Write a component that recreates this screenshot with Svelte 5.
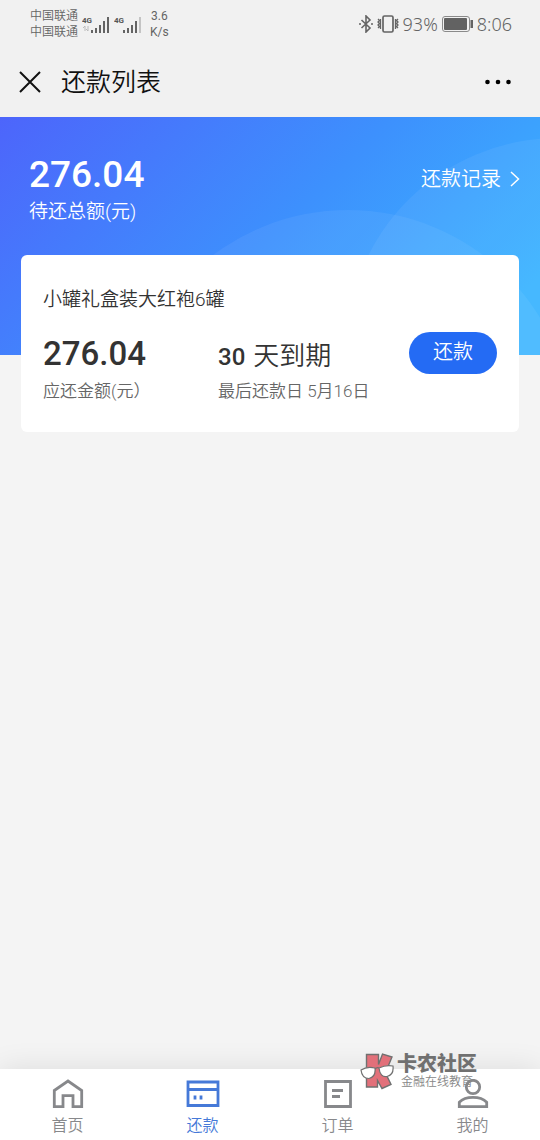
<script>
	let active = $state('repay');

	const total = '276.04';

	const bills = [{ name: '小罐礼盒装大红袍6罐', amount: '276.04', days: 30, due: '5月16日' }];

	const tabs = [
		{ id: 'home', label: '首页' },
		{ id: 'repay', label: '还款' },
		{ id: 'order', label: '订单' },
		{ id: 'mine', label: '我的' }
	];
</script>

{#snippet signal(weak)}
	<svg class="signal" width="28" height="20" viewBox="0 0 28 20" aria-hidden="true">
		<text x="0" y="9" class="network">4G</text>
		{#if !weak}
			<path d="M3 17v-5l-2 2M6 12v5l-2-2" fill="none" stroke="#bbb" />
		{/if}
		<path d="M9 16h2v3H9zM13 14h2v5h-2zM17 11h2v8h-2zM21 7h2v12h-2z" fill="#646464" />
		<path d="M25 3h2v16h-2z" fill={weak ? '#c4c4c4' : '#646464'} />
	</svg>
{/snippet}

<div class="page">
	<div class="status">
		<div class="carriers">
			<span>中国联通</span>
			<span>中国联通</span>
		</div>
		{@render signal(false)}
		{@render signal(true)}
		<div class="speed">
			<span>3.6</span>
			<span>K/s</span>
		</div>
		<div class="system">
			<svg width="14" height="18" viewBox="0 0 14 18" fill="none" stroke="#646464" stroke-width="1.6" aria-hidden="true">
				<path d="M2.500 5l8.500 8-4 4V1l4 4-8.500 8M0 9h2M12 9h2" />
			</svg>
			<svg width="22" height="18" viewBox="0 0 22 18" fill="none" stroke="#646464" aria-hidden="true">
				<rect x="6" y="1" width="10" height="16" rx="1.500" stroke-width="1.700" />
				<path d="M1 4l1.500 1.500L1 7l1.500 1.500L1 10l1.500 1.500L1 13M3.500 4v10M21 4l-1.500 1.500L21 7l-1.500 1.500L21 10l-1.500 1.500L21 13M18.500 4v10" stroke-width="1.300" />
			</svg>
			<span>93%</span>
			<svg class="battery" width="31" height="16" viewBox="0 0 31 16" aria-hidden="true">
				<rect x=".5" y=".5" width="27" height="15" rx="2.500" fill="#f1f1f1" stroke="#8a8a8a" />
				<rect x="2" y="2" width="23" height="12" rx="1" fill="#626262" />
				<path d="M28.500 4H31v8h-2.500z" fill="#646464" />
			</svg>
			<span>8:06</span>
		</div>
	</div>

	<header class="nav">
		<button class="plain" aria-label="关闭">
			<svg width="22" height="22" viewBox="0 0 22 22" fill="none" stroke="#111" stroke-width="2">
				<path d="M1 1l20 20M21 1L1 21" />
			</svg>
		</button>
		<h1>还款列表</h1>
		<button class="plain more" aria-label="更多">
			<svg width="28" height="6" viewBox="0 0 28 6" fill="#000">
				<circle cx="3.500" cy="3" r="2.300" />
				<circle cx="14" cy="3" r="2.300" />
				<circle cx="24.500" cy="3" r="2.300" />
			</svg>
		</button>
	</header>

	<main>
		<section class="hero">
			<svg class="circles" width="540" height="238" viewBox="0 0 540 238" aria-hidden="true">
				<circle cx="348" cy="318" r="225" />
				<circle cx="558" cy="233" r="212" />
			</svg>
			<div class="total">
				<strong>{total}</strong>
				<span>待还总额(元)</span>
			</div>
			<a class="records" href="#records">
				还款记录
				<svg width="10" height="16" viewBox="0 0 10 16" fill="none" stroke="#fff" stroke-width="1.500" aria-hidden="true">
					<path d="M1 1l7.500 7L1 15" />
				</svg>
			</a>
		</section>

		{#each bills as bill}
			<article class="card">
				<h2>{bill.name}</h2>
				<div class="bill">
					<div>
						<div class="value">{bill.amount}</div>
						<div class="hint">应还金额(元）</div>
					</div>
					<div>
						<div class="value days"><b>{bill.days}</b> <span>天到期</span></div>
						<div class="hint">最后还款日 {bill.due}</div>
					</div>
					<button class="pay">还款</button>
				</div>
			</article>
		{/each}
	</main>

	<nav class="tabs">
		{#each tabs as tab}
			<button class="tab" class:active={active === tab.id} onclick={() => (active = tab.id)}>
				<svg width="34" height="30" viewBox="0 0 34 30" fill="none" stroke="currentColor" stroke-width="2.800" aria-hidden="true">
					{#if tab.id === 'home'}
						<path d="M3.300 11.500L17 2l13.700 9.500v16.200h-8.700v-11h-10v11H3.300z" />
					{:else if tab.id === 'repay'}
						<path d="M2 3h30v23.500H2zM2 10.500h30" />
						<path d="M9 16.500v4M15 16.500v4" />
					{:else if tab.id === 'order'}
						<path d="M4.500 2.500h25v25h-25z" />
						<path d="M11 11.500h11M11 17.500h8" />
					{:else}
						<circle cx="17" cy="8" r="6.700" />
						<path d="M3.300 27.700v-4.500Q8 18.300 17 18.300t13.700 4.900v4.500z" />
					{/if}
				</svg>
				<span>{tab.label}</span>
			</button>
		{/each}

		<div class="watermark">
			<svg width="34" height="37" viewBox="0 0 34 37" aria-hidden="true">
				<path d="M6.500 1.500h12v10l4-10.500 9.500 3-5 12-2 3 6 12.500-9 4-4.500-8v6.500h-11z" fill="#e2707a" stroke="#707070" stroke-width="1.400" />
				<path d="M1 17q6-4 14-2 1 9-6 10.500-7 0-8-8.500zM19 15q7-3.500 14-2 1 9-6 10.500-7 1-8-8.500z" fill="#fff" stroke="#707070" stroke-width="1.200" />
				<path d="M15 16q2-2 4-1" fill="none" stroke="#707070" stroke-width="1.200" />
			</svg>
			<div>
				<strong>卡农社区</strong>
				<span>金融在线教育</span>
			</div>
		</div>
	</nav>
</div>

<style>
	:global(body) {
		margin: 0;
		background: #f4f4f4;
	}

	.page {
		display: flex;
		flex-direction: column;
		min-height: 100vh;
		font-family: Roboto, 'Noto Sans CJK SC', sans-serif;
		font-weight: 350;
		color: #333;
	}

	h1,
	h2 {
		margin: 0;
		font-weight: 350;
	}

	button {
		border: 0;
		padding: 0;
		font: inherit;
		cursor: pointer;
	}

	svg {
		display: block;
		flex: none;
	}

	.status {
		display: flex;
		align-items: center;
		padding: 8px 28px 7px 30px;
		background: #f1f1f1;
		color: #646464;
	}

	.carriers,
	.speed {
		display: flex;
		flex-direction: column;
		font-size: 12px;
		line-height: 16px;
	}

	.speed {
		align-items: center;
		margin-left: 8px;
		font-weight: 400;
	}

	.signal {
		margin-left: 4px;
	}

	.network {
		font-size: 8px;
		font-weight: 700;
		fill: #555;
	}

	.system {
		display: flex;
		align-items: center;
		gap: 4px;
		margin-left: auto;
		font-family: 'Noto Sans', sans-serif;
		font-size: 18px;
		line-height: 24px;
	}

	.nav {
		display: flex;
		align-items: center;
		gap: 20px;
		height: 70px;
		padding: 0 28px 0 19px;
		background: #f1f1f1;
		color: #111;
	}

	.nav h1 {
		padding-top: 2px;
		font-size: 25px;
		line-height: 36px;
	}

	.plain {
		background: none;
	}

	.more {
		margin-left: auto;
	}

	main {
		flex: 1;
	}

	.hero {
		position: relative;
		display: flex;
		justify-content: space-between;
		align-items: flex-start;
		overflow: hidden;
		padding: 38px 20px 130px 29px;
		background: linear-gradient(135deg, #4d65fb 0%, #3d90fd 50%, #3bb4ff 90%);
		color: #fff;
	}

	.circles {
		position: absolute;
		top: 0;
		right: 0;
		fill: #fff;
		fill-opacity: 0.06;
	}

	.total {
		position: relative;
		display: flex;
		flex-direction: column;
		gap: 4px;
		font-size: 19px;
		line-height: 26px;
	}

	.total strong {
		font-size: 37px;
		line-height: 40px;
		font-weight: 500;
	}

	.records {
		position: relative;
		display: flex;
		align-items: center;
		gap: 9px;
		padding-top: 12px;
		font-size: 20px;
		line-height: 24px;
		color: #fff;
		text-decoration: none;
	}

	.card {
		position: relative;
		margin: -100px 21px 0;
		padding: 33px 22px 29px;
		border-radius: 6px;
		background: #fff;
	}

	.card h2 {
		font-size: 19px;
		line-height: 24px;
	}

	.bill {
		display: grid;
		grid-template-columns: minmax(0, 175px) 1fr auto;
		align-items: start;
		margin-top: 20px;
	}

	.value {
		height: 44px;
		font-size: 33px;
		line-height: 44px;
		font-weight: 500;
		white-space: nowrap;
	}

	.days {
		display: flex;
		align-items: baseline;
		gap: 8px;
		padding-top: 2px;
		height: 42px;
	}

	.days b {
		font-size: 24px;
		font-weight: 500;
	}

	.days span {
		font-size: 26px;
		font-weight: 350;
	}

	.hint {
		margin-top: 3px;
		font-size: 17px;
		line-height: 24px;
		color: #666;
		white-space: nowrap;
	}

	.pay {
		width: 88px;
		height: 42px;
		padding-bottom: 6px;
		border-radius: 21px;
		background: #246bf4;
		color: #fff;
		font-size: 20px;
	}

	.tabs {
		position: relative;
		display: grid;
		grid-template-columns: repeat(4, 1fr);
		height: 71px;
		background: #fff;
		box-shadow: 0 0 30px rgba(0, 0, 0, 0.1);
	}

	.tab {
		display: flex;
		flex-direction: column;
		align-items: center;
		gap: 5px;
		padding-top: 10px;
		background: none;
		color: #87888b;
		font-size: 16px;
		line-height: 24px;
	}

	.active {
		color: #4579d8;
	}

	.watermark {
		position: absolute;
		right: 63px;
		bottom: 50px;
		display: flex;
		gap: 3px;
		color: #707070;
		pointer-events: none;
	}

	.watermark div {
		display: flex;
		flex-direction: column;
	}

	.watermark strong {
		font-size: 20px;
		line-height: 22px;
		font-weight: 900;
	}

	.watermark span {
		font-size: 12px;
		line-height: 14px;
		color: #888;
		text-align: center;
	}
</style>
